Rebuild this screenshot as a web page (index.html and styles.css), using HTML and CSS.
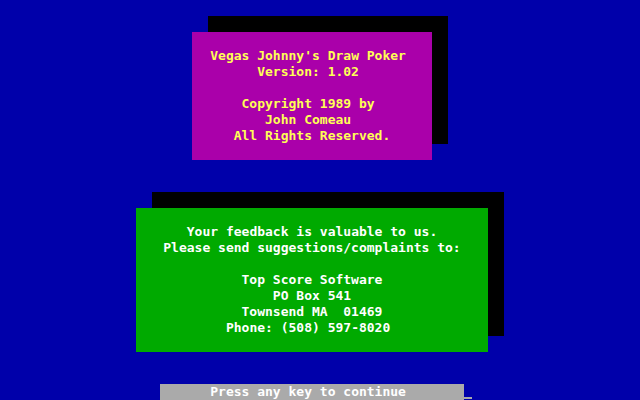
FILE: index.html
```html
<!DOCTYPE html>
<html lang="en">
<head>
<meta charset="utf-8">
<title>Vegas Johnny's Draw Poker</title>
<link rel="stylesheet" href="styles.css">
</head>
<body>
<main class="screen">
<pre class="panel panel-title">Vegas Johnny's Draw Poker 
Version: 1.02 

Copyright 1989 by 
John Comeau 
All Rights Reserved.</pre>
<pre class="panel panel-contact">Your feedback is valuable to us.
Please send suggestions/complaints to:

Top Score Software
PO Box 541
Townsend MA  01469
Phone: (508) 597-8020 </pre>
<button class="prompt" type="button">Press any key to continue <span class="cursor"></span></button>
</main>
</body>
</html>
```
FILE: styles.css
```css
* {
  box-sizing: border-box;
}

body {
  margin: 0;
  background: #0000aa;
  font: bold 13px/16px "DejaVu Sans Mono", monospace;
}

.screen {
  display: flex;
  flex-direction: column;
  align-items: center;
  min-height: 100vh;
  padding: 32px 16px 0 0;
}

.panel {
  width: 100%;
  margin: 0 0 48px;
  padding: 16px 0;
  font: inherit;
  text-align: center;
  box-shadow: 16px -16px 0 #000000;
}

.panel-title {
  max-width: 240px;
  background: #aa00aa;
  color: #ffff55;
}

.panel-contact {
  max-width: 352px;
  margin-bottom: 32px;
  background: #00aa00;
  color: #ffffff;
}

.prompt {
  position: relative;
  width: 100%;
  max-width: 304px;
  margin: auto 0 0;
  padding: 0;
  border: 0;
  background: #aaaaaa;
  color: #ffffff;
  font: inherit;
  text-align: center;
  white-space: pre;
}

.cursor {
  position: absolute;
  left: 100%;
  bottom: 1px;
  width: 8px;
  height: 2px;
  background: #aaaaaa;
}
```
